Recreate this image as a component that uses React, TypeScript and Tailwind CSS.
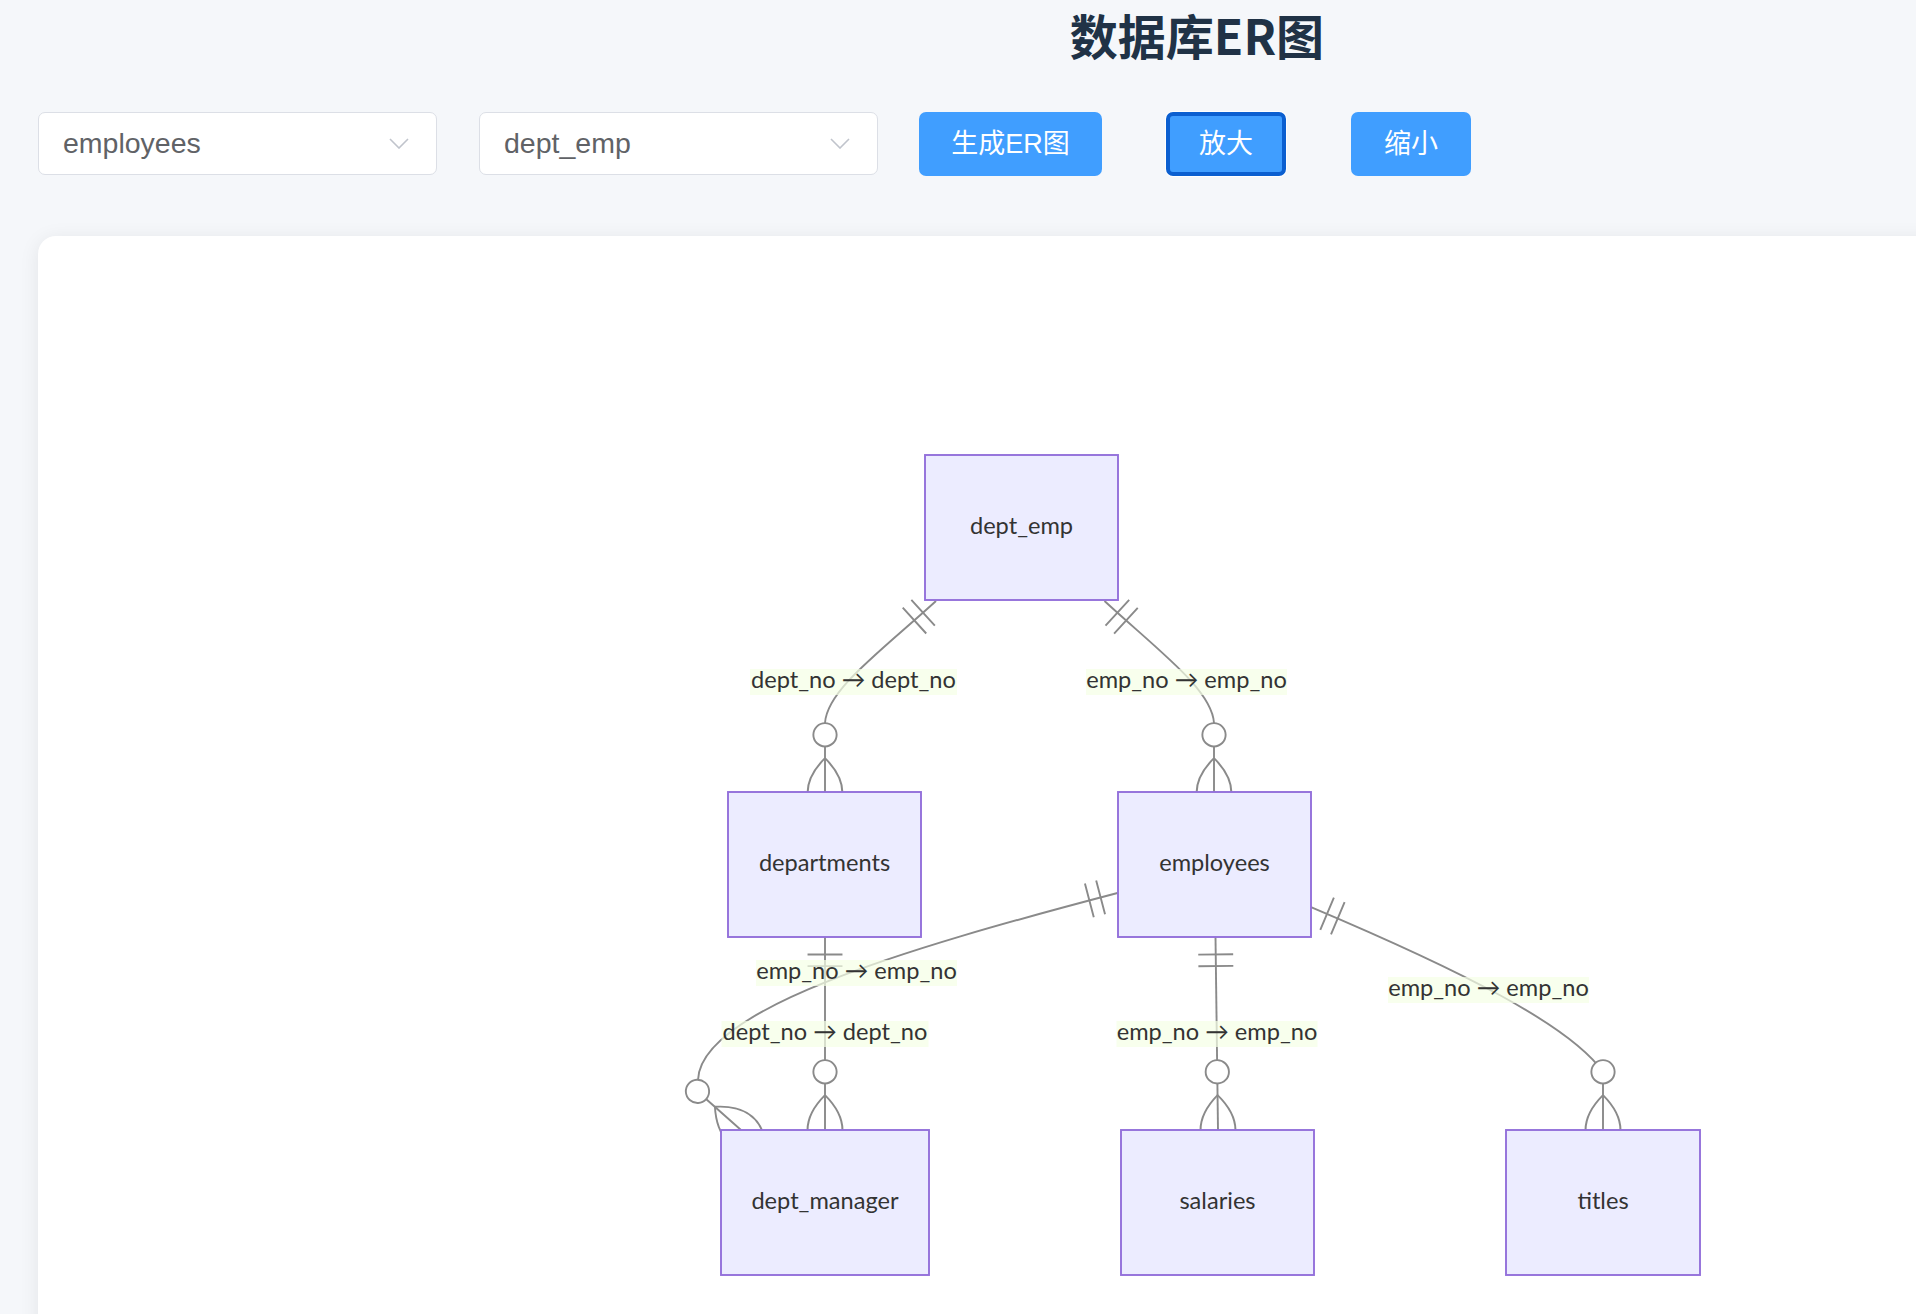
import React from 'react';

// mermaid-style ER diagram, drawn at ~1.94x scale
const S = 1.94;
const SW = 1.9;
const LINE = '#8a8a8a';

type Pt = { x: number; y: number; a: number };

const OnlyOne: React.FC<Pt> = ({ x, y, a }) => (
    <g transform={`translate(${x} ${y}) rotate(${a})`} stroke={LINE} strokeWidth={SW} fill="none">
        <path d={`M${9 * S},${-9 * S} L${9 * S},${9 * S} M${15 * S},${-9 * S} L${15 * S},${9 * S}`} />
    </g>
);

const ZeroOrMore: React.FC<Pt> = ({ x, y, a }) => (
    <g transform={`translate(${x} ${y}) rotate(${a})`} stroke={LINE} strokeWidth={SW} fill="none">
        <path d={`M${-18 * S},0 Q0,${-18 * S} ${18 * S},0 Q0,${18 * S} ${-18 * S},0`} />
        <circle cx={-30 * S} cy={0} r={6 * S} fill="#ffffff" />
    </g>
);

const entities = [
    { name: 'dept_emp', x: 925, y: 455, w: 193, h: 145 },
    { name: 'departments', x: 728, y: 792, w: 193, h: 145 },
    { name: 'employees', x: 1118, y: 792, w: 193, h: 145 },
    { name: 'dept_manager', x: 721, y: 1130, w: 208, h: 145 },
    { name: 'salaries', x: 1121, y: 1130, w: 193, h: 145 },
    { name: 'titles', x: 1506, y: 1130, w: 194, h: 145 },
];

const edges = [
    { d: 'M936 601 C880 652, 827 690, 825 723 L825 793', s: { x: 936, y: 601, a: 137.7 }, e: { x: 825, y: 793, a: 90 } },
    { d: 'M1104.5 601 C1160 652, 1212 690, 1214 723 L1214 793', s: { x: 1104.5, y: 601, a: 42.6 }, e: { x: 1214, y: 793, a: 90 } },
    { d: 'M1117.5 893 C900 950, 700 1010, 698 1080 L697.6 1091.5 L741 1130', s: { x: 1117.5, y: 893, a: 165.3 }, e: { x: 741, y: 1130, a: 41.6 } },
    { d: 'M825 937 L825 1130', s: { x: 825, y: 937, a: 90 }, e: { x: 825, y: 1130, a: 90 } },
    { d: 'M1215.5 937 L1218 1130', s: { x: 1215.5, y: 937, a: 89.3 }, e: { x: 1218, y: 1130, a: 89.3 } },
    { d: 'M1311 907 C1460 970, 1570 1025, 1603 1072 L1603 1130', s: { x: 1311, y: 907, a: 22.9 }, e: { x: 1603, y: 1130, a: 90 } },
];

const labels = [
    { t: 'dept_no → dept_no', x: 750, y: 669, w: 207 },
    { t: 'emp_no → emp_no', x: 1086, y: 669, w: 201 },
    { t: 'emp_no → emp_no', x: 756, y: 960, w: 201 },
    { t: 'dept_no → dept_no', x: 721.5, y: 1021, w: 207 },
    { t: 'emp_no → emp_no', x: 1116.5, y: 1021, w: 201 },
    { t: 'emp_no → emp_no', x: 1388, y: 977, w: 201 },
];

const DIAGRAM_FONT = 'Lato, "Open Sans", sans-serif';
const FS = 23.6;

const ErDiagram: React.FC = () => (
    <svg width={1034} height={830} viewBox="680 450 1034 830" className="mx-auto block">
        {edges.map((e, i) => (
            <g key={i}>
                <path d={e.d} stroke={LINE} strokeWidth={SW} fill="none" />
                <OnlyOne {...e.s} />
                <ZeroOrMore {...e.e} />
            </g>
        ))}
        {labels.map((l, i) => (
            <g key={i}>
                <rect x={l.x} y={l.y} width={l.w} height={26} fill="#f5ffe6" opacity={0.7} />
                <text
                    x={l.x + l.w / 2}
                    y={l.y + 10}
                    textAnchor="middle"
                    dominantBaseline="central"
                    fill="#333333"
                    fontSize={FS}
                    fontFamily={DIAGRAM_FONT}
                >
                    {l.t}
                </text>
            </g>
        ))}
        {entities.map((en) => (
            <g key={en.name}>
                <rect x={en.x} y={en.y} width={en.w} height={en.h} fill="#ececff" stroke="#9370db" strokeWidth={SW} />
                <text
                    x={en.x + en.w / 2}
                    y={en.y + en.h / 2 - 3}
                    textAnchor="middle"
                    dominantBaseline="central"
                    fill="#333333"
                    fontSize={FS}
                    fontFamily={DIAGRAM_FONT}
                >
                    {en.name}
                </text>
            </g>
        ))}
    </svg>
);

const Select: React.FC<{ value: string; className?: string }> = ({ value, className }) => (
    <div className={`flex h-[63px] w-[399px] items-center justify-between rounded-[7px] border border-[#dcdfe6] bg-white pl-[24px] pr-[27px] ${className ?? ''}`}>
        <span className="font-['Liberation_Sans',sans-serif] text-[28.5px] text-[#606266]">{value}</span>
        <svg width="20" height="11" viewBox="0 0 20 11" fill="none">
            <polyline points="1,1 10,10 19,1" stroke="#c0c4cc" strokeWidth="1.6" />
        </svg>
    </div>
);

const App: React.FC = () => {
    return (
        <div
            className="h-screen w-full overflow-hidden bg-[#f5f7fa]"
            style={{ fontFamily: '"Liberation Sans", "Noto Sans CJK SC", sans-serif' }}
        >
            <div className="w-[2394px]">
                <h1
                    className="h-[68px] text-center text-[48px] font-bold leading-[68px] text-[#203246]"
                    style={{ fontFamily: '"Noto Sans CJK SC", sans-serif' }}
                >
                    数据库ER图
                </h1>

                <div className="mt-[44px] flex items-start pl-[38px]">
                    <Select value="employees" />
                    <Select value="dept_emp" className="ml-[42px]" />
                    <button className="ml-[41px] h-[64px] w-[183px] rounded-[7px] bg-[#409eff] text-[27px] text-white">
                        生成ER图
                    </button>
                    <button className="ml-[64px] h-[64px] w-[120px] rounded-[7px] border-[4px] border-[#0b5fd0] bg-[#409eff] text-[27px] text-white shadow-[0_0_0_1px_#ffffff]">
                        放大
                    </button>
                    <button className="ml-[65px] h-[64px] w-[120px] rounded-[7px] bg-[#409eff] text-[27px] text-white">
                        缩小
                    </button>
                </div>

                <div className="ml-[38px] mt-[60px] h-[1200px] w-[2318px] rounded-[18px] bg-white pt-[214px] shadow-[0_3px_20px_rgba(0,0,0,0.08)]">
                    <ErDiagram />
                </div>
            </div>
        </div>
    );
};

export default App;
